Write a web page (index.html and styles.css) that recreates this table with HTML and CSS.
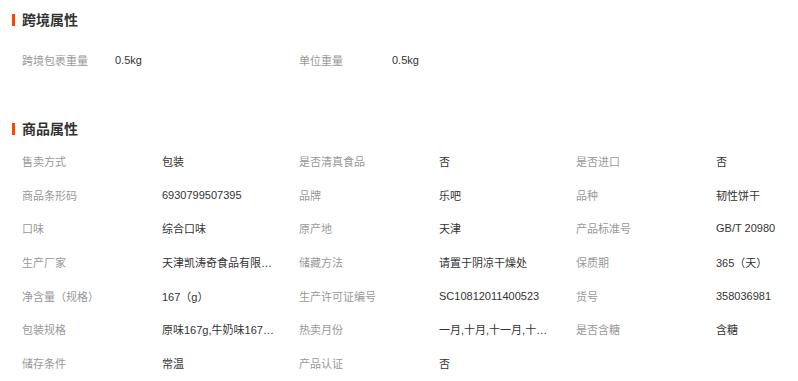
FILE: index.html
```html
<!DOCTYPE html>
<html lang="zh-CN">
<head>
<meta charset="utf-8">
<link rel="stylesheet" href="styles.css">
</head>
<body>
<div class="page">
  <section class="block block--cross">
    <h2 class="title"><span class="title__bar"></span>跨境属性</h2>
    <div class="grid grid--cross">
      <div class="item"><span class="item__label">跨境包裹重量</span><span class="item__value">0.5kg</span></div>
      <div class="item"><span class="item__label">单位重量</span><span class="item__value">0.5kg</span></div>
    </div>
  </section>
  <section class="block block--goods">
    <h2 class="title"><span class="title__bar"></span>商品属性</h2>
    <div class="grid grid--goods">
      <div class="item"><span class="item__label">售卖方式</span><span class="item__value">包装</span></div>
      <div class="item"><span class="item__label">是否清真食品</span><span class="item__value">否</span></div>
      <div class="item"><span class="item__label">是否进口</span><span class="item__value">否</span></div>

      <div class="item"><span class="item__label">商品条形码</span><span class="item__value">6930799507395</span></div>
      <div class="item"><span class="item__label">品牌</span><span class="item__value">乐吧</span></div>
      <div class="item"><span class="item__label">品种</span><span class="item__value">韧性饼干</span></div>

      <div class="item"><span class="item__label">口味</span><span class="item__value">综合口味</span></div>
      <div class="item"><span class="item__label">原产地</span><span class="item__value">天津</span></div>
      <div class="item"><span class="item__label">产品标准号</span><span class="item__value">GB/T 20980</span></div>

      <div class="item"><span class="item__label">生产厂家</span><span class="item__value">天津凯涛奇食品有限公司</span></div>
      <div class="item"><span class="item__label">储藏方法</span><span class="item__value">请置于阴凉干燥处</span></div>
      <div class="item"><span class="item__label">保质期</span><span class="item__value">365（天）</span></div>

      <div class="item"><span class="item__label">净含量（规格）</span><span class="item__value">167（g）</span></div>
      <div class="item"><span class="item__label">生产许可证编号</span><span class="item__value">SC10812011400523</span></div>
      <div class="item"><span class="item__label">货号</span><span class="item__value">358036981</span></div>

      <div class="item"><span class="item__label">包装规格</span><span class="item__value">原味167g,牛奶味167g,巧克力味167g</span></div>
      <div class="item"><span class="item__label">热卖月份</span><span class="item__value">一月,十月,十一月,十二月</span></div>
      <div class="item"><span class="item__label">是否含糖</span><span class="item__value">含糖</span></div>

      <div class="item"><span class="item__label">储存条件</span><span class="item__value">常温</span></div>
      <div class="item"><span class="item__label">产品认证</span><span class="item__value">否</span></div>
    </div>
  </section>
</div>
</body>
</html>
```

FILE: styles.css
```css
* { box-sizing: border-box; }

html, body {
  margin: 0;
  padding: 0;
  background: #fff;
}

body {
  font-family: "Liberation Sans", "Noto Sans CJK SC", sans-serif;
  font-size: 11px;
  color: #333;
}

.page {
  padding: 10px 0 0 12px;
  overflow: hidden;
}

.title {
  display: flex;
  align-items: center;
  gap: 7px;
  margin: 0;
  height: 20px;
  font-size: 14px;
  font-weight: bold;
  color: #333;
  line-height: 20px;
}

.title__bar {
  width: 3px;
  height: 12px;
  background: #ff4400;
}

.grid {
  display: grid;
  grid-template-columns: 277px 277px minmax(0, 1fr);
  grid-auto-rows: 33.7px;
  padding-left: 10px;
}

.grid--cross {
  margin-top: 13.5px;
}

.block--goods .title {
  margin-top: 42px;
}

.grid--goods {
  margin-top: 5px;
}

.item {
  display: flex;
  align-items: center;
  white-space: nowrap;
  min-width: 0;
}

.item__label {
  flex: none;
  width: 140px;
  color: #999;
}

.grid--cross .item__label {
  width: 93px;
}

.item__value {
  width: 112px;
  min-width: 0;
  overflow: hidden;
  text-overflow: ellipsis;
  color: #333;
}
```
